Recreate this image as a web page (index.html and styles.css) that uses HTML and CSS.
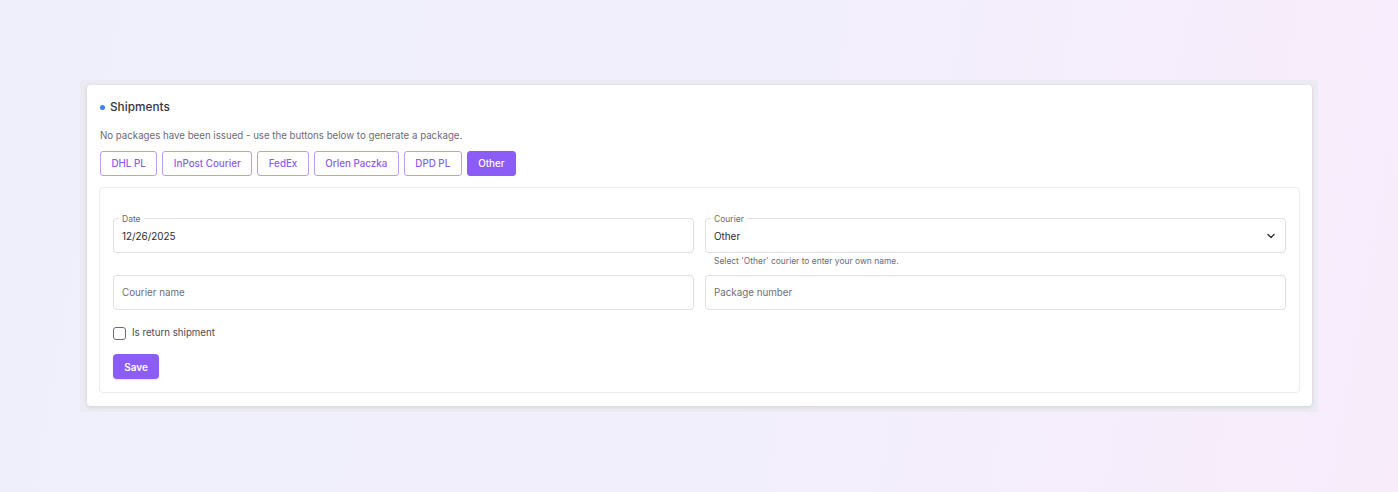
FILE: index.html
```html
<!DOCTYPE html>
<html lang="en">
<head>
<meta charset="utf-8">
<title>Shipments</title>
<link rel="stylesheet" href="styles.css">
</head>
<body>
<div class="page">
  <div class="shell">
    <section class="card">
      <h2 class="title"><span class="dot"></span>Shipments</h2>
      <p class="desc">No packages have been issued - use the buttons below to generate a package.</p>
      <div class="couriers">
        <button class="cbtn">DHL PL</button>
        <button class="cbtn">InPost Courier</button>
        <button class="cbtn">FedEx</button>
        <button class="cbtn">Orlen Paczka</button>
        <button class="cbtn">DPD PL</button>
        <button class="cbtn active">Other</button>
      </div>
      <div class="panel">
        <div class="grid">
          <div class="col">
            <div class="field">
              <span class="legend">Date</span>
              <span class="value">12/26/2025</span>
            </div>
          </div>
          <div class="col">
            <div class="field">
              <span class="legend">Courier</span>
              <span class="value">Other</span>
              <svg class="chev" width="10" height="10" viewBox="0 0 10 10"><path d="M2 3.5 L5 6.5 L8 3.5" fill="none" stroke="#333" stroke-width="1.4" stroke-linecap="round" stroke-linejoin="round"/></svg>
            </div>
            <div class="help">Select 'Other' courier to enter your own name.</div>
          </div>
          <div class="col">
            <div class="field"><span class="ph">Courier name</span></div>
          </div>
          <div class="col">
            <div class="field"><span class="ph">Package number</span></div>
          </div>
        </div>
        <label class="check"><span class="box"></span>Is return shipment</label>
        <button class="save">Save</button>
      </div>
    </section>
  </div>
</div>
</body>
</html>
```

FILE: styles.css
```css
* { box-sizing: border-box; }
html, body { margin: 0; height: 100%; }
body {
  font-family: Inter, "Noto Sans", sans-serif;
  background: #f0effb;
  color: #333;
}
.page {
  width: 1398px;
  height: 492px;
  padding: 80px 80px 0 80px;
  background: linear-gradient(100deg, #efeffc 0%, #f2effc 55%, #f8ecfb 100%);
}
.shell {
  width: 1238px;
  background: #ecebf3;
  padding: 5px 6px 6px 7px;
  border-radius: 2px;
}
.card {
  background: #fff;
  border-radius: 4px;
  box-shadow: 0 1px 4px rgba(0,0,0,0.12);
  padding: 13px 12px 13px 13px;
}
.title {
  margin: 0;
  font-size: 11.8px;
  line-height: 18px;
  font-weight: 500;
  color: #353542;
  display: flex;
  align-items: center;
}
.dot {
  width: 5px;
  height: 5px;
  border-radius: 50%;
  background: #3b82f6;
  margin: 0 5px 0 0;
}
.desc {
  margin: 12px 0 0 0;
  font-size: 9.7px;
  line-height: 16px;
  color: #6b6b7a;
}
.couriers {
  display: flex;
  gap: 5px;
  margin-top: 7px;
}
.cbtn {
  font-family: inherit;
  height: 25px;
  padding: 0 10.5px;
  font-size: 9.8px;
  font-weight: 500;
  color: #8b5cf6;
  background: #fff;
  border: 1px solid #b89cf7;
  border-radius: 3px;
}
.cbtn.active {
  background: #8b5cf6;
  border-color: #8b5cf6;
  color: #fff;
}
.panel {
  margin: 11px 0 0 -1px;
  border: 1px solid #ececf0;
  border-radius: 4px;
  padding: 30px 13px 13px 13px;
}
.grid {
  display: grid;
  grid-template-columns: 1fr 1fr;
  column-gap: 11px;
  row-gap: 8px;
}
.field {
  position: relative;
  height: 35px;
  border: 1px solid #dedee3;
  border-radius: 4px;
  display: flex;
  align-items: center;
  padding: 0 9px 0 8px;
}
.legend {
  position: absolute;
  top: -5px;
  left: 5px;
  padding: 0 3px;
  background: #fff;
  font-size: 8.5px;
  line-height: 11px;
  color: #6a6a72;
}
.value {
  font-size: 9.9px;
  color: #2a2a33;
  margin-top: 1px;
}
.ph {
  font-size: 9.8px;
  color: #6e6e78;
}
.chev { margin-left: auto; }
.help {
  margin: 2px 0 0 9px;
  font-size: 8.45px;
  line-height: 12px;
  color: #6b6b78;
}
.check {
  display: flex;
  align-items: center;
  margin-top: 15px;
  font-size: 9.7px;
  line-height: 16px;
  color: #4a4a55;
}
.box {
  width: 13px;
  height: 13px;
  border: 1.5px solid #6b6b78;
  border-radius: 3px;
  margin-right: 6px;
}
.save {
  display: block;
  margin-top: 13px;
  font-family: inherit;
  width: 46px;
  height: 25px;
  padding: 0;
  border: 0;
  border-radius: 4px;
  background: #8b5cf6;
  color: #fff;
  font-size: 10px;
  font-weight: 600;
  box-shadow: 0 1px 2px rgba(0,0,0,0.12);
}
```
